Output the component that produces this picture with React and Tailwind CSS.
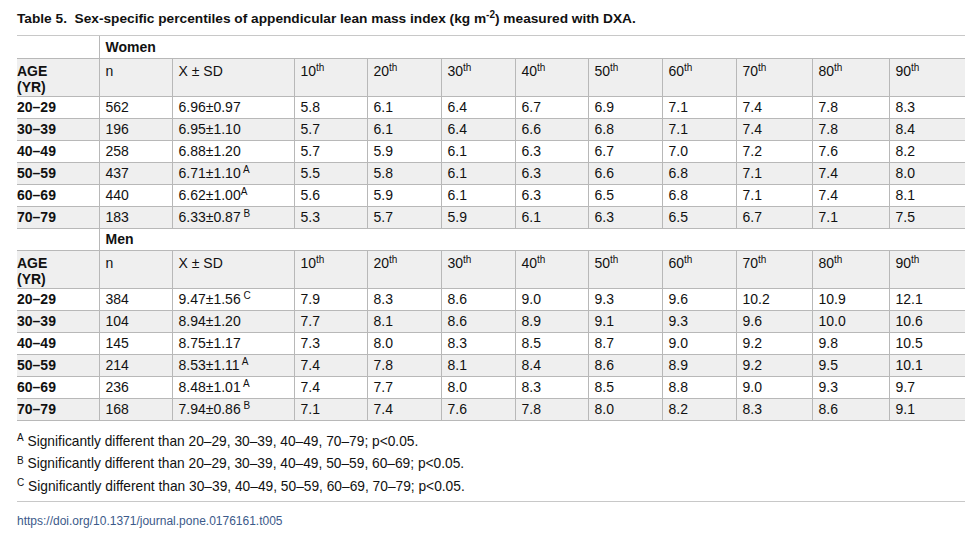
import React from "react";

const widths = [82, 73, 122, 73, 74, 74, 73, 74, 74, 76, 77, 76];
const pcts = ["10", "20", "30", "40", "50", "60", "70", "80", "90"];

const women = [
  ["20–29", "562", "6.96±0.97", "", "5.8 6.1 6.4 6.7 6.9 7.1 7.4 7.8 8.3"],
  ["30–39", "196", "6.95±1.10", "", "5.7 6.1 6.4 6.6 6.8 7.1 7.4 7.8 8.4"],
  ["40–49", "258", "6.88±1.20", "", "5.7 5.9 6.1 6.3 6.7 7.0 7.2 7.6 8.2"],
  ["50–59", "437", "6.71±1.10", " A", "5.5 5.8 6.1 6.3 6.6 6.8 7.1 7.4 8.0"],
  ["60–69", "440", "6.62±1.00", "A", "5.6 5.9 6.1 6.3 6.5 6.8 7.1 7.4 8.1"],
  ["70–79", "183", "6.33±0.87", " B", "5.3 5.7 5.9 6.1 6.3 6.5 6.7 7.1 7.5"],
];

const men = [
  ["20–29", "384", "9.47±1.56", " C", "7.9 8.3 8.6 9.0 9.3 9.6 10.2 10.9 12.1"],
  ["30–39", "104", "8.94±1.20", "", "7.7 8.1 8.6 8.9 9.1 9.3 9.6 10.0 10.6"],
  ["40–49", "145", "8.75±1.17", "", "7.3 8.0 8.3 8.5 8.7 9.0 9.2 9.8 10.5"],
  ["50–59", "214", "8.53±1.11", " A", "7.4 7.8 8.1 8.4 8.6 8.9 9.2 9.5 10.1"],
  ["60–69", "236", "8.48±1.01", " A", "7.4 7.7 8.0 8.3 8.5 8.8 9.0 9.3 9.7"],
  ["70–79", "168", "7.94±0.86", " B", "7.1 7.4 7.6 7.8 8.0 8.2 8.3 8.6 9.1"],
];

function GroupRow({ label }) {
  return (
    <tr className="h-[22px] bg-white">
      <td className="p-0 border-r border-[#b8b8b8]"></td>
      <td colSpan={11} className="pl-[6px] py-0 font-bold align-middle">
        {label}
      </td>
    </tr>
  );
}

function HeaderRow() {
  return (
    <tr className="h-[38px] bg-[#efefef] border-t border-b border-[#b8b8b8]">
      <td className="p-0 pt-[4px] align-top font-bold leading-[16px] border-r border-[#b8b8b8]">
        AGE
        <br />
        (YR)
      </td>
      <td className="pl-[6px] pt-[4px] align-top leading-[16px] border-r border-[#b8b8b8]">n</td>
      <td className="pl-[6px] pt-[4px] align-top leading-[16px] border-r border-[#b8b8b8]">X ± SD</td>
      {pcts.map((p, i) => (
        <td
          key={p}
          className={`pl-[6px] pt-[4px] align-top leading-[16px] ${i < 8 ? "border-r border-[#b8b8b8]" : ""}`}
        >
          {p}
          <sup className="text-[10px] top-[-0.45em]">th</sup>
        </td>
      ))}
    </tr>
  );
}

function DataRow({ row, idx }) {
  const vals = row[4].split(" ");
  return (
    <tr className={`h-[22px] border-b border-[#b8b8b8] ${idx % 2 === 1 ? "bg-[#efefef]" : "bg-white"}`}>
      <td className="p-0 font-bold align-middle border-r border-[#b8b8b8]">{row[0]}</td>
      <td className="pl-[6px] py-0 align-middle border-r border-[#b8b8b8]">{row[1]}</td>
      <td className="pl-[6px] py-0 align-middle border-r border-[#b8b8b8]">
        {row[2]}
        {row[3] && (
          <sup className="text-[10px] top-[-0.5em] whitespace-pre">{row[3]}</sup>
        )}
      </td>
      {vals.map((v, i) => (
        <td
          key={i}
          className={`pl-[6px] py-0 align-middle ${i < 8 ? "border-r border-[#b8b8b8]" : ""}`}
        >
          {v}
        </td>
      ))}
    </tr>
  );
}

export default function App() {
  return (
    <div className="w-[977px] h-[542px] bg-white px-[17px] pt-[10px] text-[#111] font-['Liberation_Sans',Arial,sans-serif]">
      <h1 className="text-[13.7px] font-bold leading-[17px] pb-[8px] border-b border-[#c8c8c8] w-[948px]">
        Table 5.&nbsp; Sex-specific percentiles of appendicular lean mass index (kg m
        <sup className="text-[10px] top-[-0.5em]">-2</sup>) measured with DXA.
      </h1>

      <table className="w-[948px] border-collapse table-fixed text-[14px] leading-[16px]">
        <colgroup>
          {widths.map((w, i) => (
            <col key={i} style={{ width: w }} />
          ))}
        </colgroup>
        <tbody>
          <GroupRow label="Women" />
          <HeaderRow />
          {women.map((r, i) => (
            <DataRow key={r[0]} row={r} idx={i} />
          ))}
          <GroupRow label="Men" />
          <HeaderRow />
          {men.map((r, i) => (
            <DataRow key={"m" + r[0]} row={r} idx={i} />
          ))}
        </tbody>
      </table>

      {/* footnotes */}
      <div className="w-[948px] mt-[10px] pb-[3px] border-b border-[#c8c8c8] text-[13.75px] leading-[22.5px]">
        <p>
          <sup className="text-[10px] top-[-0.45em]">A</sup> Significantly different than 20–29, 30–39, 40–49, 70–79; p&lt;0.05.
        </p>
        <p>
          <sup className="text-[10px] top-[-0.45em]">B</sup> Significantly different than 20–29, 30–39, 40–49, 50–59, 60–69; p&lt;0.05.
        </p>
        <p>
          <sup className="text-[10px] top-[-0.45em]">C</sup> Significantly different than 30–39, 40–49, 50–59, 60–69, 70–79; p&lt;0.05.
        </p>
      </div>

      <p className="mt-[11px] text-[12px] leading-[16px] text-[#3c5a8a]">
        https://doi.org/10.1371/journal.pone.0176161.t005
      </p>
    </div>
  );
}
